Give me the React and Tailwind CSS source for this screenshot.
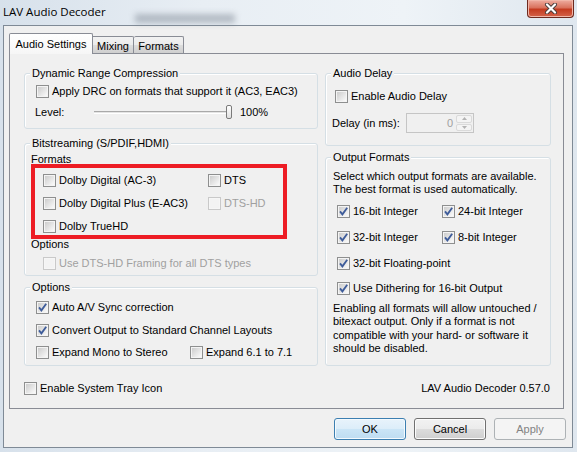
import React from "react";

const Box = ({ checked, disabled }) => (
  <span
    className={`flex h-[13px] w-[13px] shrink-0 items-center justify-center border ${
      disabled ? "border-[#c9c9c9] bg-[#f6f6f6]" : "border-[#8e8f8f] bg-[#f4f4f4]"
    }`}
  >
    <span
      className={`relative h-[9px] w-[9px] ${
        disabled ? "bg-[#f3f3f3]" : "bg-gradient-to-br from-[#cdcdcd] to-[#fafafa]"
      }`}
    >
      {checked && (
        <svg width="11" height="11" viewBox="0 0 11 11" className="absolute -left-px -top-px">
          <path d="M2 5.4 4.4 8.4 9.2 1.8" fill="none" stroke="#3e5c9a" strokeWidth="1.8" />
        </svg>
      )}
    </span>
  </span>
);

const Check = ({ label, checked, disabled, className = "" }) => (
  <div className={`flex h-[14px] items-center gap-[3px] ${className}`}>
    <Box checked={checked} disabled={disabled} />
    <span className={`whitespace-nowrap ${disabled ? "text-[#a0a0a0]" : "text-black"}`}>{label}</span>
  </div>
);

const Group = ({ title, className = "", children }) => (
  <fieldset className={`rounded-[3px] border border-[#d5dfe5] shadow-[inset_1px_1px_0_#fff] ${className}`}>
    <legend className="ml-[5px] bg-[#f0f0f0] px-[2px] leading-[14px]">{title}</legend>
    {children}
  </fieldset>
);

const Button = ({ children, kind }) => {
  const styles = {
    default:
      "border-[#3c7fb1] bg-[linear-gradient(#e8f3fb,#dcedf9_50%,#cbe5f6_50%,#bedcf1)] text-black shadow-[inset_0_0_0_1px_#f4fafe]",
    normal:
      "border-[#707070] bg-[linear-gradient(#f2f2f2,#ebebeb_50%,#dddddd_50%,#cfcfcf)] text-black shadow-[inset_0_0_0_1px_#fcfcfc]",
    disabled: "border-[#adb2b5] bg-[#f4f4f4] text-[#838383]",
  };
  return (
    <div className={`flex h-[22px] w-[72px] items-center justify-center rounded-[3px] border ${styles[kind]}`}>
      {children}
    </div>
  );
};

const Arrow = ({ up }) => (
  <span className="flex flex-1 items-center justify-center rounded-[2px] border border-[#dadada] bg-[#f4f4f4]">
    <svg width="5" height="3" viewBox="0 0 5 3">
      <path d={up ? "M0 3 2.5 0 5 3z" : "M0 0 2.5 3 5 0z"} fill="#b3b3b3" />
    </svg>
  </span>
);

export default function App() {
  return (
    <div className="relative flex h-[452px] w-[577px] flex-col overflow-hidden bg-[linear-gradient(90deg,#d7e1eb,#e8eef4_35%,#eef3f7_70%,#dfe7ef)] font-['Liberation_Sans',Arial,sans-serif] text-[11px] leading-[14px] text-black">
      <div className="pointer-events-none absolute left-[135px] top-[14px] h-[9px] w-[100px] bg-[#7d8793] opacity-50 blur-[3px]" />

      <div className="relative flex h-[25px] items-start">
        <span className="pl-[3px] pt-[4px] font-['Open_Sans',sans-serif] text-[11.5px] leading-[16px] text-black">
          LAV Audio Decoder
        </span>
        <div className="ml-auto mr-[3px] flex h-[18px] w-[47px] items-center justify-center rounded-b-[4px] border border-t-0 border-[#6d2a1f] bg-[linear-gradient(#eeada0,#d9725d_45%,#c43b20_55%,#d4634a)] shadow-[inset_0_0_0_1px_#f1b6a8]">
          <svg width="14" height="11" viewBox="0 0 14 11">
            <path d="M3 1.5 11 9.5M11 1.5 3 9.5" stroke="#4a3c3a" strokeWidth="4" strokeLinecap="round" />
            <path d="M3 1.5 11 9.5M11 1.5 3 9.5" stroke="#ffffff" strokeWidth="2.2" strokeLinecap="round" />
          </svg>
        </div>
      </div>

      <div className="ml-[3px] h-[423px] w-[570px] border border-[#7f8a96] bg-[#f0f0f0] pt-[7px]">
        <div className="ml-[5px] flex h-[20px] items-end">
          <div className="relative z-10 -mb-px flex h-[21px] w-[84px] items-center justify-center rounded-t-[2px] border border-b-0 border-[#898c95] bg-[linear-gradient(#ffffff,#f6f6f6)] pb-[1px]">
            Audio Settings
          </div>
          <div className="flex h-[17px] w-[41px] items-center justify-center rounded-tr-[2px] border border-b-0 border-l-0 border-[#898c95] bg-[linear-gradient(#f2f2f2,#ebebeb_50%,#dddddd_50%,#cfcfcf)] pt-[1px]">
            Mixing
          </div>
          <div className="flex h-[17px] w-[50px] items-center justify-center rounded-t-[2px] border border-b-0 border-l-0 border-[#898c95] bg-[linear-gradient(#f2f2f2,#ebebeb_50%,#dddddd_50%,#cfcfcf)] pt-[1px]">
            Formats
          </div>
        </div>

        <div className="ml-[5px] h-[356px] w-[555px] border border-[#898c95] bg-[#f0f0f0] pl-[14px] pt-[12px]">
          <div className="flex gap-[7px]">
            <div className="flex w-[294px] flex-col">
              <Group title="Dynamic Range Compression" className="h-[63px]">
                <div className="pl-[11px] pt-[4px]">
                  <Check label="Apply DRC on formats that support it (AC3, EAC3)" />
                  <div className="mt-[6px] flex h-[16px] items-center">
                    <span className="-ml-px w-[59px]">Level:</span>
                    <span className="h-[3px] w-[132px] border-y border-t-[#a9a9a9] border-b-white bg-[#e4e4e4]" />
                    <span className="h-[14px] w-[6px] rounded-[2px] border border-[#7a7a7a] bg-gradient-to-b from-white to-[#e0e0e0]" />
                    <span className="ml-[8px]">100%</span>
                  </div>
                </div>
              </Group>

              <Group title="Bitstreaming (S/PDIF,HDMI)" className="mt-[7px] h-[140px]">
                <div className="pl-[6px] pt-[3px]">
                  <div className="leading-[13px]">Formats</div>
                  <div className="-mt-[2px] h-[75px] w-[256px] border-4 border-[#ed1c24] pl-[8px] pt-[5px]">
                    <div className="grid grid-cols-[165px_1fr] gap-y-[9px]">
                      <Check label="Dolby Digital (AC-3)" />
                      <Check label="DTS" />
                      <Check label="Dolby Digital Plus (E-AC3)" />
                      <Check label="DTS-HD" disabled />
                      <Check label="Dolby TrueHD" />
                    </div>
                  </div>
                  <div className="-mt-[2px] leading-[14px]">Options</div>
                  <Check label="Use DTS-HD Framing for all DTS types" disabled className="ml-[12px] mt-[5px]" />
                </div>
              </Group>

              <Group title="Options" className="mt-[4px] h-[86px]">
                <div className="pl-[11px] pt-[6px]">
                  <Check label="Auto A/V Sync correction" checked />
                  <Check label="Convert Output to Standard Channel Layouts" checked className="mt-[9px]" />
                  <div className="mt-[8px] flex">
                    <Check label="Expand Mono to Stereo" className="w-[154px]" />
                    <Check label="Expand 6.1 to 7.1" />
                  </div>
                </div>
              </Group>
            </div>

            <div className="flex w-[226px] flex-col">
              <Group title="Audio Delay" className="h-[80px]">
                <div className="pl-[9px] pt-[9px]">
                  <Check label="Enable Audio Delay" />
                  <div className="mt-[10px] flex items-center">
                    <span className="-ml-[3px] w-[74px]">Delay (in ms):</span>
                    <div className="flex h-[20px] w-[68px] border border-[#c5c5c5] bg-[#f0f0f0]">
                      <span className="flex flex-1 items-center justify-end pr-[3px] text-[#a0a0a0]">0</span>
                      <div className="flex w-[17px] flex-col gap-px py-px pr-px">
                        <Arrow up />
                        <Arrow />
                      </div>
                    </div>
                  </div>
                </div>
              </Group>

              <Group title="Output Formats" className="mt-[4px] h-[216px]">
                <div className="pl-[7px] pt-[6px]">
                  <p className="whitespace-nowrap leading-[13px]">
                    Select which output formats are available.
                    <br />
                    The best format is used automatically.
                  </p>
                  <div className="mt-[8px] grid grid-cols-[105px_1fr] gap-y-[12px] pl-[4px]">
                    <Check label="16-bit Integer" checked />
                    <Check label="24-bit Integer" checked />
                    <Check label="32-bit Integer" checked />
                    <Check label="8-bit Integer" checked />
                  </div>
                  <Check label="32-bit Floating-point" checked className="ml-[4px] mt-[12px]" />
                  <Check label="Use Dithering for  16-bit Output" checked className="ml-[4px] mt-[11px]" />
                  <p className="mt-[7px] whitespace-nowrap leading-[13.4px]">
                    Enabling all formats will allow untouched /
                    <br />
                    bitexact output. Only if a format is not
                    <br />
                    compatible with your hard- or software it
                    <br />
                    should be disabled.
                  </p>
                </div>
              </Group>
            </div>
          </div>

          <div className="mt-[15px] flex w-[527px] items-center justify-between pr-px">
            <Check label="Enable System Tray Icon" />
            <span>LAV Audio Decoder 0.57.0</span>
          </div>
        </div>

        <div className="mt-[9px] flex justify-end gap-[8px] pr-[6px]">
          <Button kind="default">OK</Button>
          <Button kind="normal">Cancel</Button>
          <Button kind="disabled">Apply</Button>
        </div>
      </div>
    </div>
  );
}
